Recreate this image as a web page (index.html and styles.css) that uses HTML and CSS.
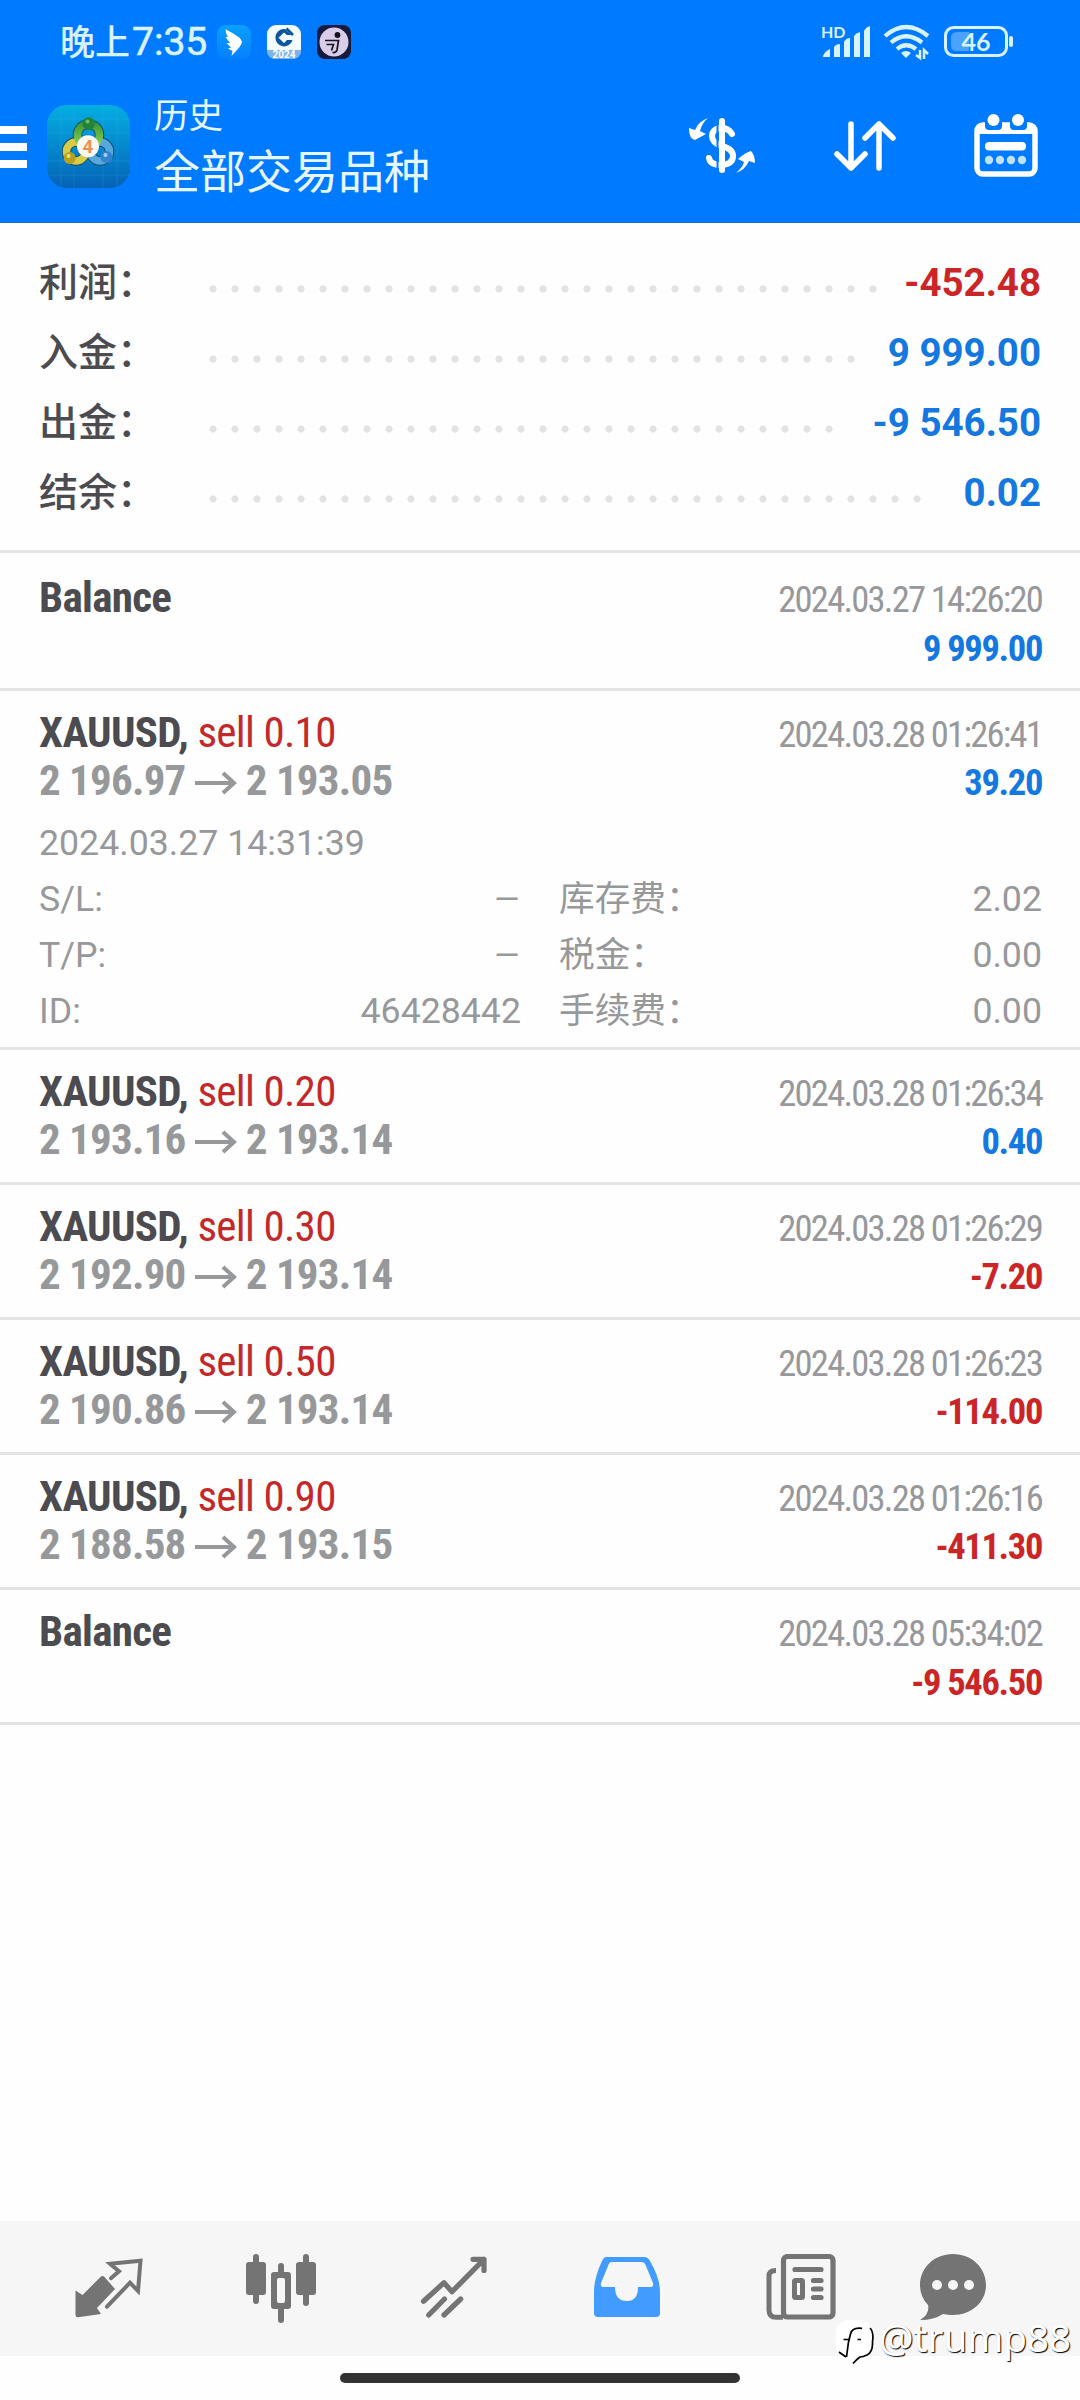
FILE: index.html
```html
<!DOCTYPE html>
<html lang="zh-CN">
<head>
<meta charset="utf-8">
<title>历史</title>
<link rel="stylesheet" href="styles.css">
</head>
<body>
<div class="app">
  <header class="header">
    <div class="status">
      <span class="clock">晚上<span class="digits">7:35</span></span>
      <svg class="notif" viewBox="0 0 34 34"><defs><linearGradient id="wg" x1="0" y1="0" x2="0" y2="1"><stop offset="0" stop-color="#0aa0ff"/><stop offset="1" stop-color="#0580ff"/></linearGradient></defs><rect width="34" height="34" rx="9" fill="url(#wg)"/><path d="M8.700 4C12 7 24 11 25 17C24 21 21 24 19 26L14.500 31L15.500 26L11 23.500L14 22.500L9.500 18L13 18L8.500 12L11 12Q8 8 8.700 4Z" fill="#fff"/></svg>
      <svg class="notif" viewBox="0 0 34 34"><rect width="34" height="34" rx="9" fill="#f4fbff"/><path d="M0 25H34Q34 34 25 34H9Q0 34 0 25Z" fill="#7fb2ea"/><path d="M17 4A8.700 8.700 0 1 0 25.500 15H20L17 18L11.500 12.700L17 7.500L20 10H24.500L18 4Z" fill="#0d559c"/><path d="M19.500 3.500L26 10" stroke="#0d559c" stroke-width="2.500"/><text class="tiny" x="17" y="33" text-anchor="middle">2024</text></svg>
      <svg class="notif" viewBox="0 0 34 34"><rect width="34" height="34" rx="8" fill="#171a3c"/><circle cx="17" cy="17" r="14.500" fill="#d9cdea"/><circle cx="20.500" cy="10" r="2.900" fill="#15121c"/><path d="M8 15.500H21.500L20 25Q19 28 15.500 27.500M9.500 19.500H16.500L14.500 25.500" fill="none" stroke="#15121c" stroke-width="1.700"/></svg>
      <svg class="sysicons" viewBox="0 0 200 44">
        <text class="hd" x="2" y="18">HD</text>
        <g fill="#d9f2ff"><path d="M4 36Q6 31 11 29V37H5Q3 37 4 36Z"/><path d="M15 27Q17 24 21 24V37H15Z"/><path d="M25 22Q27 18 31 18V37H25Z"/><path d="M35 16Q37 13 41 12V37H35Z"/><path d="M45 11Q47 7 51 6V37H45Z"/><path d="M87 38l-5-5q5-4 10 0z"/></g>
        <g fill="none" stroke="#d9f2ff" stroke-width="4.200"><path d="M66 16Q87-2 109 16"/><path d="M72 22.500Q87 10 103 22.500"/><path d="M78 29Q87 21.500 97 29"/></g>
        <path d="M101 30v8l-4-3M105 39V30l4 4" stroke="#d9f2ff" stroke-width="2.500" fill="none"/>
        <rect x="126.500" y="7.500" width="61" height="28" rx="8" fill="none" stroke="#d9f2ff" stroke-width="3"/><path d="M138 12H150V31H138Q132 31 132 25V18Q132 12 138 12Z" fill="#4ba3ff"/><rect x="190" y="16" width="4" height="11" rx="2" fill="#d9f2ff"/><text class="batt" x="157" y="30.500" text-anchor="middle">46</text>
      </svg>
    </div>
    <div class="toolbar">
      <div class="menu"><i></i><i></i><i></i></div>
      <svg class="logo" viewBox="0 0 83 83"><defs><linearGradient id="lg" x1="0" y1="0" x2="0" y2="1"><stop offset="0" stop-color="#04aee2"/><stop offset="1" stop-color="#0562b8"/></linearGradient><linearGradient id="gg" x1="0" y1="0" x2="0" y2="1"><stop offset="0" stop-color="#3d9a35"/><stop offset="1" stop-color="#8bd05a"/></linearGradient></defs><rect width="83" height="83" rx="20" fill="url(#lg)"/><path d="M14 0V83M27 0V83M56 0V83M70 0V83M0 14H83M0 28H83M0 56H83M0 70H83" stroke="#48b8e6" opacity=".2"/>
        <g fill="none" stroke="#15506a" stroke-width="9.500"><circle cx="41.500" cy="30" r="11"/><circle cx="29" cy="46.500" r="9.500"/><circle cx="53" cy="46.500" r="9.500"/></g>
        <g fill="none" stroke-width="7.500"><circle cx="53" cy="46.500" r="9.500" stroke="#58a8e0"/><circle cx="29" cy="46.500" r="9.500" stroke="#d8cb45"/><circle cx="41.500" cy="30" r="11" stroke="url(#gg)"/></g>
        <circle cx="41.700" cy="18.600" r="6.300" fill="#238338"/><circle cx="40.500" cy="16.500" r="2" fill="#70bd74"/><circle cx="22.700" cy="53" r="6" fill="#b5a020"/><circle cx="21.500" cy="51" r="2" fill="#ece07a"/><circle cx="59.500" cy="52" r="6" fill="#3285cc"/><circle cx="58.500" cy="50" r="2" fill="#9ed3f4"/><circle cx="41" cy="41.300" r="11" fill="#fcf8f4"/><text class="four" x="41" y="48" text-anchor="middle">4</text></svg>
      <div class="titles"><div class="sub">历史</div><div class="title">全部交易品种</div></div>
      <div class="actions">
        <svg width="68" height="60" viewBox="0 0 68 60"><g fill="none" stroke="#fff" stroke-width="6" stroke-linecap="round"><path d="M34 4V53"/><path d="M44 17Q40 10 31 11Q24 13 24 19Q24 26 34 29Q45 32 45 39Q45 47 34 48Q22 48 21 41"/></g><path d="M29.500 6V52" stroke="#007aff" stroke-width="2"/><path d="M20 1Q14 6 12 14L18 17L7 23Q1 22 1 11L7 13Q11 4 20 1ZM48 56Q55 50 56 45L50 42Q58 35 63 34Q67 38 67 46L61 44Q57 53 48 56Z" fill="#fff"/></svg>
        <svg class="sort" width="62" height="52" viewBox="0 0 62 52" fill="none" stroke="#fff" stroke-width="5.500" stroke-linecap="round" stroke-linejoin="round"><path d="M17 4V48M3 34L17 48L31 34M45 48V4M31 18L45 4L59 18"/></svg>
        <svg class="cal" width="64" height="66" viewBox="0 0 64 66"><rect x="3" y="13" width="58" height="49" rx="6" fill="none" stroke="#fff" stroke-width="5.500"/><path d="M5 12H59V22H5Z" fill="#fff"/><g fill="#007aff"><path d="M11 8H28V14Q28 18 24 18H15Q11 18 11 14ZM36 8H53V14Q53 18 49 18H40Q36 18 36 14Z"/></g><g fill="#fff"><circle cx="19.500" cy="8" r="6"/><circle cx="44" cy="8" r="6"/></g><rect x="11" y="30" width="41" height="8.500" rx="4" fill="#fff"/><g fill="#bfe2ff"><circle cx="15" cy="48" r="4.200"/><circle cx="26" cy="48" r="4.200"/><circle cx="37" cy="48" r="4.200"/><circle cx="48" cy="48" r="4.200"/></g></svg>
      </div>
    </div>
  </header>
  <section class="summary">
    <div class="sum"><b>利润：</b><i class="dots d31"></i><strong class="red">-452.48</strong></div>
    <div class="sum"><b>入金：</b><i class="dots d30"></i><strong>9 999.00</strong></div>
    <div class="sum"><b>出金：</b><i class="dots d29"></i><strong>-9 546.50</strong></div>
    <div class="sum"><b>结余：</b><i class="dots d33"></i><strong>0.02</strong></div>
  </section>
  <main class="deals">
    <article class="deal first"><div class="line"><span class="name">Balance</span><time>2024.03.27 14:26:20</time></div><div class="line solo"><span class="amount">9 999.00</span></div></article>
    <article class="deal open"><div class="line"><span class="name">XAUUSD, <em>sell 0.10</em></span><time>2024.03.28 01:26:41</time></div><div class="line"><span class="price">2 196.97 <svg class="arrow" viewBox="0 0 42 24"><path d="M0 12H40M28 2L39 12L28 22"/></svg> 2 193.05</span><span class="amount">39.20</span></div>
      <div class="details"><div class="opened">2024.03.27 14:31:39</div>
        <div class="pair"><span>S/L:</span><span class="dash">–</span></div><div class="pair"><span>库存费：</span><span>2.02</span></div>
        <div class="pair"><span>T/P:</span><span class="dash">–</span></div><div class="pair"><span>税金：</span><span>0.00</span></div>
        <div class="pair"><span>ID:</span><span>46428442</span></div><div class="pair"><span>手续费：</span><span>0.00</span></div></div>
    </article>
    <article class="deal"><div class="line"><span class="name">XAUUSD, <em>sell 0.20</em></span><time>2024.03.28 01:26:34</time></div><div class="line"><span class="price">2 193.16 <svg class="arrow" viewBox="0 0 42 24"><path d="M0 12H40M28 2L39 12L28 22"/></svg> 2 193.14</span><span class="amount">0.40</span></div></article>
    <article class="deal"><div class="line"><span class="name">XAUUSD, <em>sell 0.30</em></span><time>2024.03.28 01:26:29</time></div><div class="line"><span class="price">2 192.90 <svg class="arrow" viewBox="0 0 42 24"><path d="M0 12H40M28 2L39 12L28 22"/></svg> 2 193.14</span><span class="amount red">-7.20</span></div></article>
    <article class="deal"><div class="line"><span class="name">XAUUSD, <em>sell 0.50</em></span><time>2024.03.28 01:26:23</time></div><div class="line"><span class="price">2 190.86 <svg class="arrow" viewBox="0 0 42 24"><path d="M0 12H40M28 2L39 12L28 22"/></svg> 2 193.14</span><span class="amount red">-114.00</span></div></article>
    <article class="deal"><div class="line"><span class="name">XAUUSD, <em>sell 0.90</em></span><time>2024.03.28 01:26:16</time></div><div class="line"><span class="price">2 188.58 <svg class="arrow" viewBox="0 0 42 24"><path d="M0 12H40M28 2L39 12L28 22"/></svg> 2 193.15</span><span class="amount red">-411.30</span></div></article>
    <article class="deal"><div class="line"><span class="name">Balance</span><time>2024.03.28 05:34:02</time></div><div class="line solo"><span class="amount red">-9 546.50</span></div></article>
  </main>
  <nav class="tabs">
    <svg viewBox="0 0 72 72"><path d="M2.500 36.500L9.500 41L27.500 23Q29.500 21 31.500 23L42 35L24 54L28 60L5 63.300Q2.500 63.500 2.500 61Z" fill="#747474"/><path d="M38 24.300L46 17.300L37 9.700L67.500 6.700L65 37L57 28.700L34 52.700" fill="none" stroke="#747474" stroke-width="4" stroke-linecap="round"/></svg>
    <svg viewBox="0 0 72 72" fill="#747474"><rect x="7" y="0" width="6" height="50" rx="3"/><rect x="0" y="8" width="20" height="33" rx="3"/><rect x="57" y="0" width="6" height="52" rx="3"/><rect x="50" y="8" width="20" height="33" rx="3"/><rect x="32" y="9" width="6" height="60" rx="3"/><rect x="25" y="18" width="20" height="37" rx="3"/><rect x="31" y="24" width="8" height="25" rx="2" fill="#f6f6f6"/></svg>
    <svg viewBox="0 0 72 72" fill="none" stroke="#747474" stroke-width="5.200" stroke-linecap="round" stroke-linejoin="round"><path d="M4.500 47.300L25 28.700L33 37.700L65 5.300M54 5.300H65V16.500M9.700 61L25.500 45M25 61L41.700 45"/></svg>
    <svg viewBox="0 0 72 72"><path d="M14 3H52Q56 3 58 7Q68 24 68 38V59Q68 63 64 63H6Q2 63 2 59V38Q2 24 10 7Q12 3 14 3Z" fill="#429bff"/><path d="M20 8H49Q53 8 54 12L61 29Q62 33 58 33H46Q46 47 35 47Q23 47 23 33H12Q8 33 9 29L16 12Q17 8 20 8Z" fill="#f6f6f6"/></svg>
    <svg viewBox="0 0 72 72" fill="none" stroke="#747474"><path d="M11 16.500Q4 16.500 4 22V56Q4 63.300 11 63.300H18" stroke-width="5"/><rect x="18.500" y="2.500" width="49.500" height="60.500" rx="4" stroke-width="5.200"/><path d="M30 15.500H56M48.500 26.500H56M48.500 35H56M48.500 43.500H56" stroke-width="5.200" stroke-linecap="round"/><rect x="29.500" y="26.500" width="8" height="17" rx="1" stroke-width="5"/></svg>
    <svg class="chat" viewBox="0 0 72 72"><path d="M36 0C55 0 69 14 69 31C69 50 51 65 26 60Q17 66 3 66Q13 60 11 51Q3 43 3 31C3 14 17 0 36 0Z" fill="#747474"/><g fill="#f6f6f6"><circle cx="20" cy="31" r="5"/><circle cx="36" cy="31" r="5"/><circle cx="52" cy="31" r="5"/></g></svg>
  </nav>
  <footer class="home"><div class="pill"></div></footer>
  <div class="watermark"><svg viewBox="0 0 38 46"><rect width="37" height="38" rx="13" fill="#fff"/><path d="M8 34L12 38L22 37L17 44Z" fill="#fff"/><path d="M26 8.300Q16 7 14.500 14L12.500 22L10.500 37M7.500 19.500H14M21.500 19.500H25M34 8Q38 12 36.500 22Q37 32 31 35Q27 37 24 37Q21 39 17 43.500M3 32L10 37" fill="none" stroke="#000" stroke-width="1.700"/></svg><span>@trump88</span></div>
</div>
</body>
</html>
```
FILE: styles.css
```css
* { box-sizing: border-box; }
body { margin: 0; background: #fefefe; font-family: Roboto, "Noto Sans CJK SC", sans-serif; }
.app { position: relative; width: 1080px; height: 2400px; display: flex; flex-direction: column; overflow: hidden; }
.header { height: 223px; background: #007aff; border-bottom: 1px solid #1b6fc4; color: #e6f7ff; }
.status { height: 84px; display: flex; align-items: center; padding: 0 61px 0 60px; }
.clock { font-size: 35px; line-height: 50px; font-weight: 500; width: 157px; white-space: nowrap; color: #d9f2ff; margin-top: 1px; }
.digits { font-size: 39px; margin-left: 2px; font-weight: 400; -webkit-text-stroke: .6px #d9f2ff; }
.notif { width: 34px; height: 34px; margin-right: 16px; }
.sysicons { width: 200px; height: 44px; margin-left: auto; }
.tiny { font: 700 10px Roboto; fill: #fff; }
.hd { font: 700 16px Lato; fill: #d9f2ff; }
.batt { font: 700 25px Lato; fill: #d9f2ff; }
.toolbar { display: flex; align-items: center; height: 126px; }
.menu { width: 27px; display: grid; gap: 9px; }
.menu i { height: 8px; background: #fff; }
.logo { width: 83px; height: 83px; margin: 0 0 2px 20px; }
.four { font: 700 18px "Open Sans"; fill: #f0904b; }
.titles { margin: 0 0 3px 24px; }
.sub { font-size: 34.5px; line-height: 52px; }
.title { font-size: 46px; line-height: 60px; }
.actions { display: flex; align-items: center; margin-left: auto; padding-right: 42px; gap: 78px; }
.sort { margin-bottom: 2px; }
.cal { margin-bottom: 4px; }
.summary { height: 330px; padding: 23px 39px 0; border-bottom: 3px solid #e4e4e4; }
.sum { height: 70px; display: flex; align-items: center; color: #4b4b50; }
.sum b { font-size: 39px; font-weight: 500; width: 170px; white-space: nowrap; margin-bottom: 5px; }
.dots { height: 8px; margin-top: 15px; background: radial-gradient(circle at 4px 4px, #e2e2e2 3.2px, transparent 4px) 0 0 / 22px 8px repeat-x; }
.d29 { width: 624px; } .d30 { width: 646px; } .d31 { width: 668px; } .d33 { width: 712px; }
.sum strong { margin-left: auto; margin-top: 2px; font-size: 38.5px; font-weight: 700; color: #1578e0; }
.sum strong.red, .amount.red { color: #cc2527; }
.deal { height: 135px; padding: 16px 38px 0 39px; border-bottom: 3px solid #e4e4e4; font-stretch: 75%; }
.deal.first { height: 138px; padding-top: 19px; }
.deal.open { height: 359px; }
.line { display: flex; justify-content: space-between; align-items: baseline; height: 48px; line-height: 51px; }
.line.solo { justify-content: flex-end; padding-top: 3px; }
.name { font-size: 43px; font-weight: 700; color: #4b4b50; letter-spacing: -.68px; }
.name em { font-style: normal; font-weight: 400; color: #c4282b; }
.line time { font-size: 36.5px; color: #97989a; letter-spacing: -1.75px; }
.price { font-size: 43px; font-weight: 700; color: #97989a; letter-spacing: -.78px; }
.arrow { width: 42px; height: 24px; fill: none; stroke: #97989a; stroke-width: 4; }
.amount { font-size: 36.5px; font-weight: 700; color: #1578e0; letter-spacing: -1.35px; }
.details { display: grid; grid-template-columns: 482px 483px; column-gap: 38px; margin-top: 12px; font-stretch: 100%; font-size: 35.7px; color: #97989a; line-height: 56px; }
.opened { grid-column: 1 / 3; }
.pair { display: flex; justify-content: space-between; }
.dash { transform: scaleX(1.2); transform-origin: right; }
.tabs { margin-top: auto; height: 135px; background: #f6f6f6; display: flex; padding: 33px 0 0 73px; gap: 101px; }
.tabs svg { width: 72px; height: 72px; flex: none; }
.tabs .chat { margin-left: -21px; }
.home { height: 44px; padding-top: 17px; }
.pill { width: 400px; height: 10px; border-radius: 5px; background: #333; margin: 0 auto; }
.watermark { position: absolute; left: 836px; top: 2320px; display: flex; color: #fff; font: 38.500px/34px "Noto Sans"; text-shadow: 1px 1px 1px #000; }
.watermark svg { width: 38px; height: 46px; margin-right: 5px; }
```
